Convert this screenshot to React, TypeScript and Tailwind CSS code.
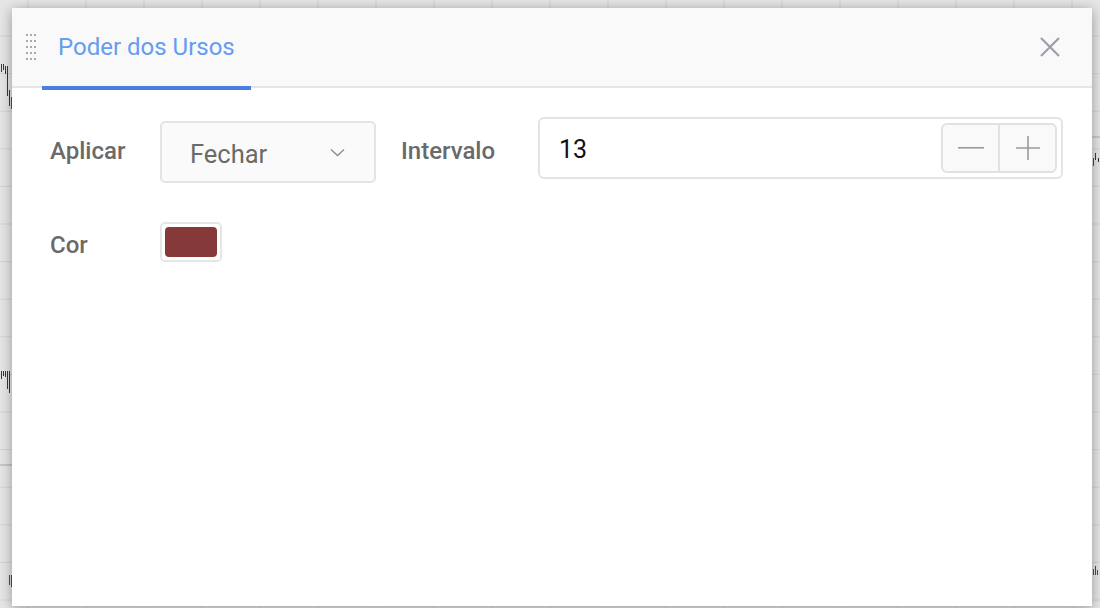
import React from "react";

const font = { fontFamily: "Roboto, 'Noto Sans', Arial, sans-serif" };

function ChartBackdrop() {
  const vLines = Array.from({ length: 20 }, (_, i) => 28 + i * 58);
  const hLines = Array.from({ length: 17 }, (_, i) => 36 + i * 37.6);
  return (
    <svg width="1100" height="608" className="absolute inset-0">
      {vLines.map((x) => (
        <line key={"v" + x} x1={x} y1="0" x2={x} y2="608" stroke="#d4d4d4" strokeWidth="1" />
      ))}
      {hLines.map((y) => (
        <line key={"h" + y} x1="0" y1={y} x2="1100" y2={y} stroke="#d4d4d4" strokeWidth="1" />
      ))}
      <line x1="0" y1="465" x2="12" y2="465" stroke="#a8a8a8" strokeWidth="1" />
      <line x1="1092" y1="137" x2="1100" y2="137" stroke="#9fb0c8" strokeWidth="1" />
      {/* candles peeking out at the sides */}
      <g fill="#5a2b2b">
        <rect x="1" y="64" width="1" height="8" />
        <rect x="3" y="64" width="1" height="6" />
        <rect x="5" y="66" width="1" height="8" />
        <rect x="7" y="66" width="1" height="30" />
        <rect x="9" y="90" width="1" height="16" />
        <rect x="1" y="371" width="1" height="8" />
        <rect x="3" y="371" width="1" height="5" />
        <rect x="5" y="371" width="1" height="6" />
        <rect x="7" y="371" width="1" height="18" />
        <rect x="9" y="371" width="1" height="22" />
        <rect x="1095" y="153" width="1" height="7" />
        <rect x="1098" y="158" width="1" height="4" />
      </g>
      <g fill="#3f5a3f">
        <rect x="11" y="97" width="1" height="12" />
        <rect x="9" y="575" width="1" height="10" />
        <rect x="11" y="575" width="1" height="12" />
        <rect x="1093" y="158" width="1" height="8" />
        <rect x="1093" y="569" width="1" height="6" />
        <rect x="1095" y="566" width="1" height="9" />
        <rect x="1097" y="570" width="1" height="5" />
      </g>
    </svg>
  );
}

function DragHandle() {
  return (
    <div className="grid grid-cols-3 gap-x-[2px] gap-y-[4px] self-center">
      {Array.from({ length: 15 }, (_, i) => (
        <span key={i} className="h-[2px] w-[2px] bg-[#a9a9a9]" />
      ))}
    </div>
  );
}

export default function App() {
  return (
    <div className="relative h-[608px] w-[1100px] overflow-hidden bg-[#e6e6e6]" style={font}>
      <ChartBackdrop />

      <div className="absolute left-[12px] top-[8px] flex h-[598px] w-[1080px] flex-col bg-white shadow-[0_2px_12px_rgba(0,0,0,0.35)]">
        <header className="flex h-[80px] items-stretch border-b-2 border-[#e5e5e5] bg-[#f9f9f9] pl-[14px] pr-[32px]">
          <DragHandle />
          <div className="-mb-[4px] ml-[6px] flex items-center border-b-4 border-[#4a7fdf] px-4 text-[24px] text-[#659cf2]">
            Poder dos Ursos
          </div>
          <button className="ml-auto self-center text-[#9ba0a7]">
            <svg width="20" height="20" viewBox="0 0 20 20" fill="none" stroke="currentColor" strokeWidth="2.2">
              <path d="M1 1 L19 19 M19 1 L1 19" />
            </svg>
          </button>
        </header>

        <div className="flex flex-col pl-[38px] pt-[29px]">
          <div className="flex items-start">
            <div className="flex h-[62px] w-[110px] items-center pt-[5px] text-[24px] font-medium text-[#6a6a6a]">
              Aplicar
            </div>
            <div className="mt-[4px] flex h-[62px] w-[216px] items-center rounded-[5px] border-2 border-[#e4e4e4] bg-[#fafafa] pl-[28px] pr-[29px] text-[25.5px] text-[#6a6a6a]">
              <span className="pt-[4px]">Fechar</span>
              <svg className="ml-auto" width="15" height="9" viewBox="0 0 15 9" fill="none" stroke="#8a8a8a" strokeWidth="1.3">
                <path d="M1 1.5 L7.5 7.5 L14 1.5" />
              </svg>
            </div>
            <div className="ml-[25px] flex h-[62px] w-[137px] items-center pt-[5px] text-[24px] font-medium text-[#6a6a6a]">
              Intervalo
            </div>
            <div className="flex h-[62px] w-[525px] items-center rounded-[6px] border-2 border-[#e4e4e4] bg-white pl-[19px] pr-[4px]">
              <span className="pt-[3px] text-[25px] text-[#111]">13</span>
              <div className="ml-auto flex h-[50px] w-[116px] rounded-[6px] border-2 border-[#e2e2e2] bg-[#f9f9f9]">
                <div className="flex flex-1 items-center justify-center border-r-2 border-[#e2e2e2]">
                  <svg width="26" height="2" viewBox="0 0 26 2">
                    <rect width="26" height="1.6" fill="#9a9a9a" />
                  </svg>
                </div>
                <div className="flex flex-1 items-center justify-center">
                  <svg width="24" height="24" viewBox="0 0 24 24" fill="none" stroke="#9a9a9a" strokeWidth="1.6">
                    <path d="M12 0 V24 M0 12 H24" />
                  </svg>
                </div>
              </div>
            </div>
          </div>

          <div className="mt-[39px] flex items-start">
            <div className="flex h-[40px] w-[110px] items-center pt-[5px] text-[24px] font-medium text-[#6a6a6a]">
              Cor
            </div>
            <div className="h-[40px] w-[62px] rounded-[5px] border-2 border-[#e6e6e6] bg-white p-[3px]">
              <div className="h-full w-full rounded-[4px] bg-[#853a39]" />
            </div>
          </div>
        </div>
      </div>
    </div>
  );
}
